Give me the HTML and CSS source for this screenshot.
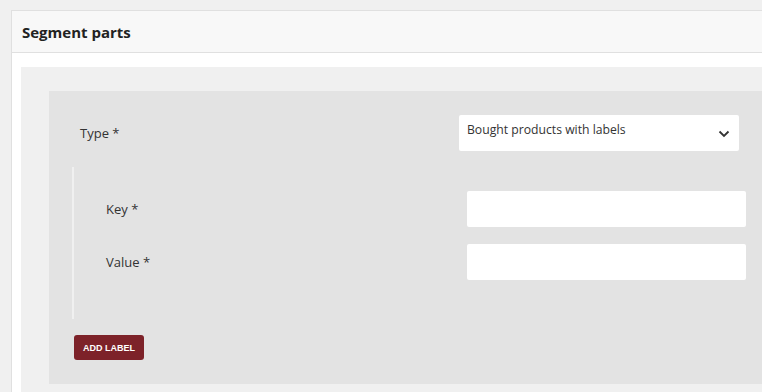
FILE: index.html
```html
<!DOCTYPE html>
<html lang="en">
<head>
    <meta charset="UTF-8">
    <meta name="viewport" content="width=device-width, initial-scale=1.0">
    <title>Segment parts</title>
    <link rel="stylesheet" href="styles.css">
</head>
<body>

    <div class="card">
        <div class="card-header">Segment parts</div>

        <div class="card-body">
            <div class="panel">
                <div class="part">

                    <!-- Part type -->
                    <div class="type-row">
                        <label class="type-label">Type *</label>
                        <div class="select">
                            <span>Bought products with labels</span>
                            <svg class="chevron" width="12" height="8" viewBox="0 0 12 8">
                                <path d="M1.5 1.5 L6 6 L10.5 1.5" fill="none" stroke="#333" stroke-width="1.8"/>
                            </svg>
                        </div>
                    </div>

                    <!-- Labels -->
                    <div class="labels-group">
                        <div class="field-row">
                            <label class="field-label">Key *</label>
                            <input class="field-input" type="text">
                        </div>
                        <div class="field-row">
                            <label class="field-label">Value *</label>
                            <input class="field-input" type="text">
                        </div>
                    </div>

                    <button class="btn-add">ADD LABEL</button>
                </div>
            </div>
        </div>
    </div>

</body>
</html>
```

FILE: styles.css
```css
body {
    margin: 0;
    background-color: #f0f0f0;
    font-family: "Open Sans", sans-serif;
    color: #333;
    overflow: hidden;
}

.card {
    margin: 10px -40px 0 11px;
    background-color: #fff;
    border: 1px solid #e0e0e0;
}

.card-header {
    display: flex;
    align-items: center;
    height: 41px;
    padding-left: 10px;
    background-color: #f8f8f8;
    border-bottom: 1px solid #e0e0e0;
    font-size: 15px;
    font-weight: bold;
    color: #222;
}

.card-body {
    padding: 14px 0 0 9px;
}

.panel {
    background-color: #f0f0f0;
    padding: 24px 0 20px 28px;
}

.part {
    background-color: #e3e3e3;
    padding: 24px 0 24px 0;
}

.type-row {
    display: flex;
    align-items: center;
    padding-left: 31px;
}

.type-label {
    width: 379px;
    font-size: 13px;
}

.select {
    position: relative;
    box-sizing: border-box;
    width: 280px;
    height: 36px;
    padding: 6px 8px;
    background-color: #fff;
    border-radius: 2px;
    font-size: 12.2px;
}

.chevron {
    position: absolute;
    right: 9px;
    top: 15px;
}

.labels-group {
    display: flex;
    flex-direction: column;
    gap: 17px;
    margin: 16px 0 0 23px;
    padding: 24px 0 39px 32px;
    border-left: 2px solid #f0f0f0;
}

.field-row {
    display: flex;
    align-items: center;
}

.field-label {
    width: 361px;
    font-size: 13px;
}

.field-input {
    box-sizing: border-box;
    width: 279px;
    height: 36px;
    border: none;
    border-radius: 2px;
    background-color: #fff;
}

.btn-add {
    display: block;
    margin: 16px 0 0 25px;
    width: 70px;
    height: 25px;
    padding: 0;
    border: none;
    border-radius: 3px;
    background-color: #7d2229;
    color: #fff;
    font-family: "Liberation Sans", Arial, sans-serif;
    font-size: 9px;
    font-weight: bold;
}
```
